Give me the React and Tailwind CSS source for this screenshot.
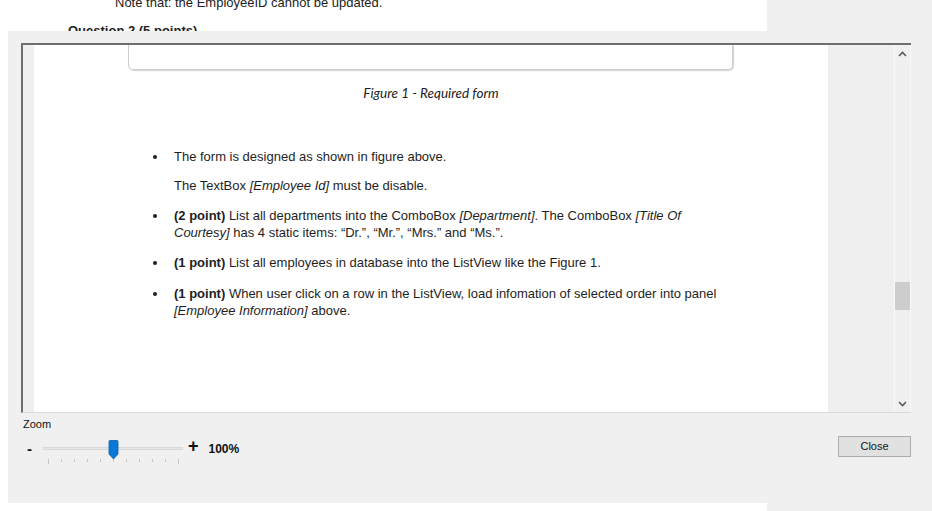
import React from "react";

const Chevron = ({ down }) => (
  <svg width="9" height="6" viewBox="0 0 9 6" className={down ? "rotate-180" : ""}>
    <path d="M1 5 L4.5 1.5 L8 5" fill="none" stroke="#5a5a5a" strokeWidth="1.6" />
  </svg>
);

const Bullet = ({ children, className = "" }) => (
  <div className={`flex ${className}`}>
    <div className="w-[140px] shrink-0 flex justify-end pr-[17px] pt-[7px]">
      <span className="block w-[4px] h-[4px] rounded-full bg-[#1e1e1e]" />
    </div>
    <p className="whitespace-nowrap">{children}</p>
  </div>
);

const ticks = Array.from({ length: 11 }, (_, i) => i);

const App = () => {
  return (
    <div className="relative w-[932px] h-[511px] overflow-hidden bg-white font-['Liberation_Sans',Arial,sans-serif]">
      {/* page behind the window */}
      <div className="flex h-full">
        <div className="w-[767px] bg-white text-[13px] leading-[15px] text-[#222]">
          <p className="mt-[-5px] pl-[115px]">Note that: the EmployeeID cannot be updated.</p>
          <p className="mt-[13px] pl-[68px] font-bold">Question 2 (5 points)</p>
        </div>
        <div className="flex-1 bg-[#efefef]" />
      </div>

      {/* print preview window */}
      <div className="absolute left-[8px] top-[31px] w-[924px] h-[472px] bg-[#f0f0f0] pl-[13px] pr-[21px] pt-[12px]">
        <div className="flex h-[370px] border-t-2 border-l-2 border-b border-t-[#6e6e6e] border-l-[#6e6e6e] border-b-[#dadada]">
          <div className="w-[11px] bg-[#efefef]" />
          <div className="w-[794px] bg-white text-[13px] leading-[17px] text-[#1e1e1e]">
            <div className="ml-[94px] w-[605px] h-[25px] border border-t-0 border-[#cdcdcd] rounded-b-[5px] shadow-[1px_1px_1px_rgba(0,0,0,0.18)]" />
            <p className="mt-[14px] text-center italic text-[13.5px] leading-[18px] font-['Lato','Open_Sans',sans-serif] text-[#222]">
              Figure 1 - Required form
            </p>
            <Bullet className="mt-[46px]">The form is designed as shown in figure above.</Bullet>
            <p className="mt-[12px] pl-[140px]">
              The TextBox <i>[Employee Id]</i> must be disable.
            </p>
            <Bullet className="mt-[13px]">
              <b>(2 point)</b> List all departments into the ComboBox <i>[Department]</i>. The ComboBox <i>[Title Of</i>
              <br />
              <i>Courtesy]</i> has 4 static items: “Dr.”, “Mr.”, “Mrs.” and “Ms.”.
            </Bullet>
            <Bullet className="mt-[13px]">
              <b>(1 point)</b> List all employees in database into the ListView like the Figure 1.
            </Bullet>
            <Bullet className="mt-[14px]">
              <b>(1 point)</b> When user click on a row in the ListView, load infomation of selected order into panel
              <br />
              <i>[Employee Information]</i> above.
            </Bullet>
          </div>
          <div className="flex-1 bg-[#efefef]" />
          <div className="w-[17px] flex flex-col bg-[#f0f0f0] border-x border-[#f8f8f8]">
            <div className="h-[17px] flex items-center justify-center">
              <Chevron />
            </div>
            <div className="flex-1">
              <div className="mt-[220px] h-[28px] bg-[#cdcdcd]" />
            </div>
            <div className="h-[17px] flex items-center justify-center">
              <Chevron down />
            </div>
          </div>
        </div>

        <div className="flex justify-between">
          <div className="pl-[2px]">
            <p className="mt-[5px] text-[11px] leading-[13px] text-[#111]">Zoom</p>
            <div className="mt-[7px] flex items-start">
              <span className="w-[20px] pl-[4px] pt-[3px] text-[15px] leading-[16px] font-bold text-[#111]">-</span>
              <div className="relative w-[140px] h-[28px]">
                <div className="absolute left-0 right-0 top-[9px] h-[3px] bg-[#e7e7e7] border border-[#d9d9d9]" />
                <svg className="absolute left-[65px] top-[2px]" width="11" height="20" viewBox="0 0 11 20">
                  <path d="M1 1.5 Q1 0.5 2 0.5 H9 Q10 0.5 10 1.5 V14 L5.5 19 L1 14 Z" fill="#0a78d6" stroke="#0560b0" strokeWidth="0.8" />
                </svg>
                <div className="absolute left-[5px] right-[4px] top-[21px] flex justify-between">
                  {ticks.map((i) => (
                    <span
                      key={i}
                      className={`block w-px bg-[#c6c6c6] ${i === 0 || i === 10 ? "h-[5px]" : "h-[3px]"}`}
                    />
                  ))}
                </div>
              </div>
              <span className="ml-[5px] mt-[-1px] text-[18px] leading-[18px] font-bold text-[#111]">+</span>
              <span className="ml-[10px] pt-[4px] text-[12px] leading-[14px] font-bold text-[#111]">100%</span>
            </div>
          </div>
          <button className="mt-[23px] w-[73px] h-[21px] bg-[#e1e1e1] border border-[#adadad] text-[11px] leading-[19px] text-[#111]">
            Close
          </button>
        </div>
      </div>
    </div>
  );
};

export default App;
